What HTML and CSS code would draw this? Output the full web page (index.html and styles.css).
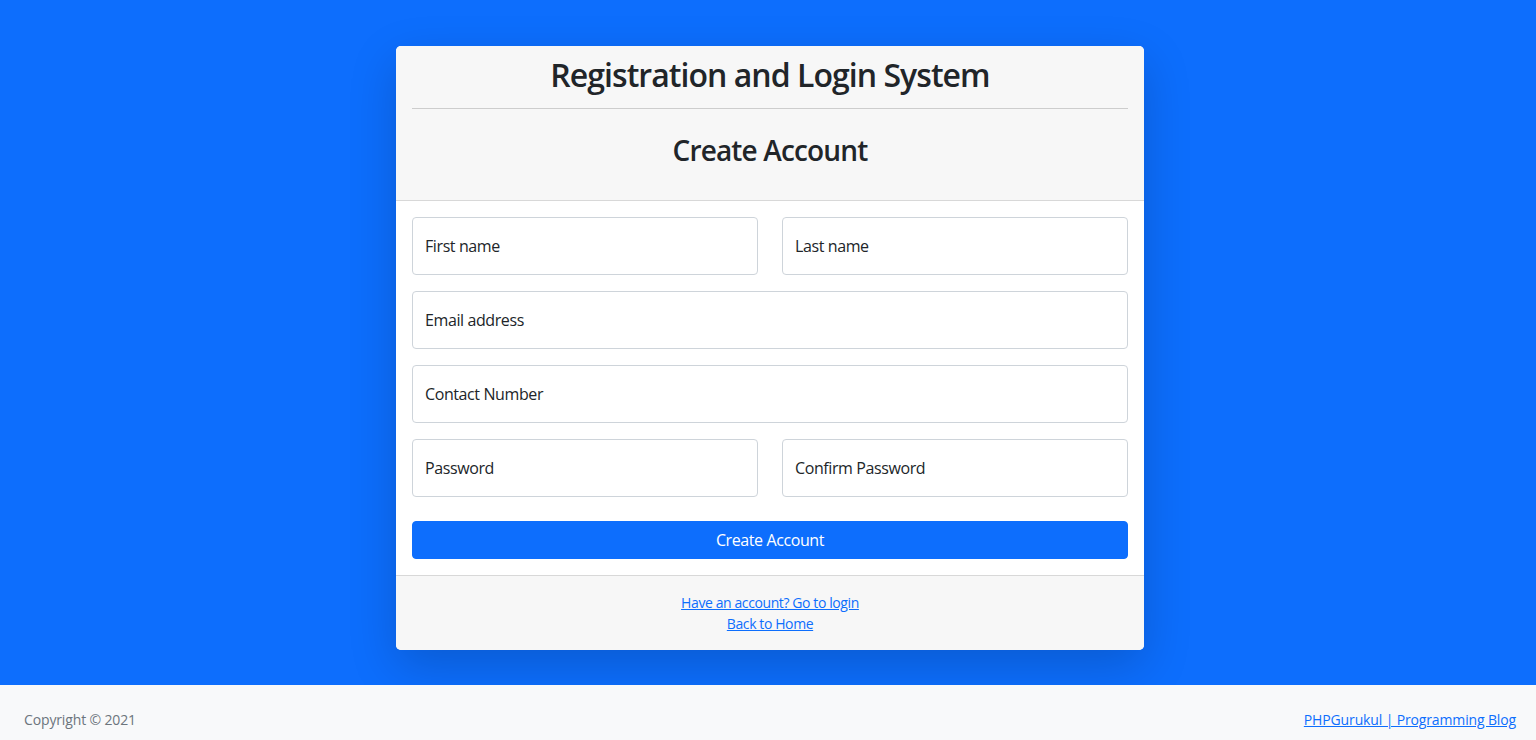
FILE: index.html
```html
<!DOCTYPE html>
<html lang="en">
<head>
<meta charset="utf-8">
<title>Registration and Login System</title>
<link rel="stylesheet" href="styles.css">
</head>
<body>
<div class="layout">
  <main class="main">
    <div class="card">
      <div class="card-header">
        <h2 class="site-title">Registration and Login System</h2>
        <hr class="divider">
        <h3 class="form-title">Create Account</h3>
      </div>
      <div class="card-body">
        <form class="form">
          <div class="row two">
            <div class="field"><label>First name</label></div>
            <div class="field"><label>Last name</label></div>
          </div>
          <div class="row">
            <div class="field"><label>Email address</label></div>
          </div>
          <div class="row">
            <div class="field"><label>Contact Number</label></div>
          </div>
          <div class="row two">
            <div class="field"><label>Password</label></div>
            <div class="field"><label>Confirm Password</label></div>
          </div>
          <button type="button" class="btn">Create Account</button>
        </form>
      </div>
      <div class="card-footer">
        <a href="#">Have an account? Go to login</a>
        <a href="#">Back to Home</a>
      </div>
    </div>
  </main>
  <footer class="page-footer">
    <span class="copy">Copyright © 2021</span>
    <a href="#">PHPGurukul | Programming Blog</a>
  </footer>
</div>
</body>
</html>
```

FILE: styles.css
```css
html, body {
  margin: 0;
  padding: 0;
  overflow: hidden;
}
body {
  font-family: "Open Sans", "Noto Sans", sans-serif;
  font-size: 16px;
  line-height: 1.5;
  letter-spacing: -0.025em;
  color: #212529;
  background: #f8f9fa;
}
.layout {
  display: flex;
  flex-direction: column;
}
.main {
  background: #0d6efd;
  padding: 46px 0 35px 4px;
  display: flex;
  justify-content: center;
}
.card {
  width: 748px;
  background: #fff;
  border-radius: 5px;
  box-shadow: 0 16px 48px rgba(0, 0, 0, 0.175);
  overflow: hidden;
}
.card-header {
  background: #f7f7f7;
  padding: 10px 16px 8px;
  border-bottom: 1px solid rgba(0, 0, 0, 0.125);
  text-align: center;
}
.site-title {
  margin: 0;
  font-size: 32px;
  font-weight: 600;
  line-height: 1.2;
  letter-spacing: -0.03em;
}
.divider {
  margin: 14px 0 25px;
  border: 0;
  border-top: 1px solid rgba(0, 0, 0, 0.17);
}
.form-title {
  margin: 0 0 24px;
  font-size: 28px;
  font-weight: 600;
  line-height: 1.2;
  letter-spacing: -0.03em;
}
.card-body {
  padding: 16px;
}
.form {
  display: flex;
  flex-direction: column;
  gap: 16px;
}
.row {
  display: flex;
  gap: 24px;
}
.field {
  flex: 1;
  height: 58px;
  box-sizing: border-box;
  border: 1px solid #ced4da;
  border-radius: 4px;
  padding: 0 12px;
  display: flex;
  align-items: center;
  background: #fff;
}
.field label {
  font-size: 16px;
}
.btn {
  margin-top: 8px;
  height: 38px;
  border: 1px solid #0d6efd;
  border-radius: 4px;
  background: #0d6efd;
  color: #fff;
  font-family: inherit;
  font-size: 16px;
  letter-spacing: inherit;
  cursor: pointer;
}
.card-footer {
  background: #f7f7f7;
  border-top: 1px solid rgba(0, 0, 0, 0.125);
  padding: 16px;
  display: flex;
  flex-direction: column;
  align-items: center;
  font-size: 14px;
  line-height: 21px;
}
a {
  color: #0d6efd;
  text-decoration: underline;
}
.page-footer {
  background: #f8f9fa;
  padding: 24px 20px 24px 24px;
  display: flex;
  justify-content: space-between;
  font-size: 14px;
  line-height: 21px;
  letter-spacing: -0.01em;
}
.copy {
  color: #6c757d;
}
```
